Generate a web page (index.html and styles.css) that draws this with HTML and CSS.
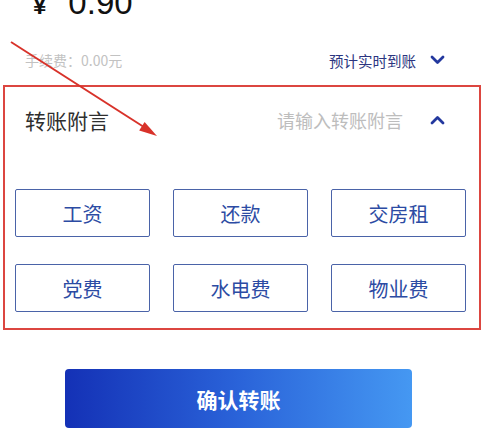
FILE: index.html
```html
<!DOCTYPE html>
<html lang="zh-CN">
<head>
    <meta charset="UTF-8">
    <meta name="viewport" content="width=device-width, initial-scale=1.0">
    <title>转账</title>
    <link rel="stylesheet" href="styles.css">
</head>
<body>
    <div class="amount">
        <span class="currency">¥</span>
        <span class="value">0.90</span>
    </div>

    <div class="fee-row">
        <span class="fee">手续费：0.00元</span>
        <span class="arrival">
            预计实时到账
            <svg class="chevron" width="15" height="10" viewBox="0 0 15 10"><polyline points="2,2 7.5,7.5 13,2"/></svg>
        </span>
    </div>

    <div class="remark-box">
        <div class="remark-head">
            <span class="remark-label">转账附言</span>
            <span class="remark-input">请输入转账附言</span>
            <svg class="chevron" width="15" height="10" viewBox="0 0 15 10"><polyline points="2,8 7.5,2.5 13,8"/></svg>
        </div>
        <div class="tags">
            <button class="tag">工资</button>
            <button class="tag">还款</button>
            <button class="tag">交房租</button>
            <button class="tag">党费</button>
            <button class="tag">水电费</button>
            <button class="tag">物业费</button>
        </div>
    </div>

    <button class="submit">确认转账</button>

    <!-- annotation arrow drawn over the page -->
    <svg class="annotation" width="498" height="444" viewBox="0 0 498 444">
        <line x1="11" y1="42" x2="147" y2="129"/>
        <polygon points="139.2,130.5 144.6,122.1 157,136"/>
    </svg>
</body>
</html>
```

FILE: styles.css
```css
body {
    margin: 0;
    background: #fff;
    font-family: "Noto Sans CJK SC", "Noto Sans", sans-serif;
    position: relative;
    overflow: hidden;
}
.amount {
    margin: -17px 0 0 33px;
    height: 40px;
    line-height: 40px;
    display: flex;
    align-items: baseline;
    color: #111;
}
.currency {
    font-family: "Liberation Sans", Arial, sans-serif;
    font-size: 24px;
    font-weight: bold;
    margin-right: 22px;
}
.value {
    font-family: "Liberation Sans", Arial, sans-serif;
    font-size: 33px;
}
.fee-row {
    display: flex;
    justify-content: space-between;
    align-items: center;
    height: 28px;
    margin-top: 23px;
    padding: 0 53px 0 25px;
}
.fee {
    font-size: 14px;
    color: #c2c2c2;
}
.arrival {
    display: flex;
    align-items: center;
    gap: 14px;
    font-size: 14.5px;
    color: #2b3580;
}
.chevron polyline {
    fill: none;
    stroke: #23389e;
    stroke-width: 2.8;
    stroke-linecap: round;
    stroke-linejoin: round;
}
.remark-box {
    margin: 11px 0 0 3px;
    width: 474px;
    border: 2px solid #dc4640;
    padding: 17px 0 16px 0;
}
.remark-head {
    display: flex;
    align-items: center;
    height: 32px;
    padding: 0 34px 0 20px;
}
.remark-label {
    font-size: 21px;
    color: #2e2e2e;
}
.remark-input {
    margin-left: auto;
    margin-right: 27px;
    font-size: 18px;
    color: #bdbdbd;
}
.tags {
    display: grid;
    grid-template-columns: repeat(3, 135px);
    column-gap: 23px;
    row-gap: 27px;
    margin-top: 53px;
    padding-left: 10px;
}
.tag {
    height: 48px;
    background: #fff;
    border: 1.5px solid #4a63a8;
    border-radius: 2px;
    font-family: inherit;
    font-size: 20px;
    color: #2c4ba3;
    padding: 0;
}
.submit {
    display: block;
    margin: 39px 0 0 65px;
    width: 347px;
    height: 59px;
    border: none;
    border-radius: 4px;
    background: linear-gradient(90deg, #1431b6 0%, #2a63d9 50%, #4598f2 100%);
    color: #fff;
    font-family: inherit;
    font-size: 21px;
    font-weight: bold;
}
.annotation {
    position: absolute;
    top: 0;
    left: 0;
    pointer-events: none;
}
.annotation line {
    stroke: #d8322a;
    stroke-width: 2;
}
.annotation polygon {
    fill: #d8322a;
}
```
